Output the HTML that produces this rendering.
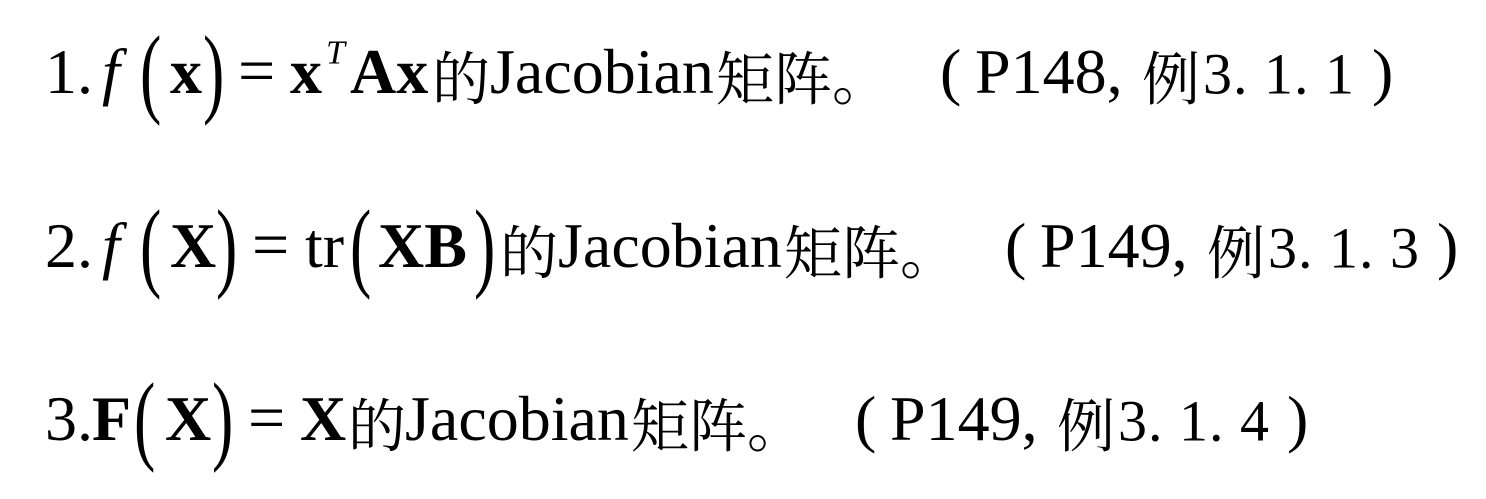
<!DOCTYPE html>
<html><head><meta charset="utf-8"><style>
html,body{margin:0;padding:0;background:#fff;width:1486px;height:499px;overflow:hidden}
.l{position:absolute;left:0;top:0;width:1486px;height:1px}
.s{position:absolute;white-space:nowrap;font-family:"Liberation Serif","Noto Serif CJK SC",serif;font-size:64px;color:#000;line-height:1;transform:translateY(-0.89em)}
.c{font-family:"Noto Serif CJK SC",serif;font-size:58px}
.d{font-size:58px;letter-spacing:1px}
.b{font-weight:bold}
.i{font-style:italic}
.e{font-size:66px}
</style></head><body>
<div class="l" style="top:97px">
<span class="s" style="left:45px">1.</span>
<span class="s i" style="left:102px">f</span>
<span class="s" style="left:140px;transform:translateY(-0.89em) scaleY(1.55)">(</span>
<span class="s b" style="left:170px">x</span>
<span class="s" style="left:203px;transform:translateY(-0.89em) scaleY(1.55)">)</span>
<span class="s e" style="left:238px">=</span>
<span class="s b" style="left:290px">x</span>
<span class="s i" style="left:326px;font-size:34px;top:-30px">T</span>
<span class="s b" style="left:350px">Ax</span>
<span class="s c" style="left:432px">的</span>
<span class="s" style="left:490px">Jacobian</span>
<span class="s c" style="left:716px">矩阵</span>
<span class="s c" style="left:832px">。</span>
<span class="s" style="left:940px">(</span>
<span class="s" style="left:975px">P148,</span>
<span class="s c" style="left:1142px">例</span>
<span class="s d" style="left:1203px">3. 1. 1</span>
<span class="s" style="left:1372px">)</span>
</div>
<div class="l" style="top:271px">
<span class="s" style="left:45px">2.</span>
<span class="s i" style="left:102px">f</span>
<span class="s" style="left:140px;transform:translateY(-0.89em) scaleY(1.55)">(</span>
<span class="s b" style="left:170px">X</span>
<span class="s" style="left:216px;transform:translateY(-0.89em) scaleY(1.55)">)</span>
<span class="s e" style="left:252px">=</span>
<span class="s" style="left:305px">tr</span>
<span class="s" style="left:350px;transform:translateY(-0.89em) scaleY(1.55)">(</span>
<span class="s b" style="left:378px">XB</span>
<span class="s" style="left:474px;transform:translateY(-0.89em) scaleY(1.55)">)</span>
<span class="s c" style="left:500px">的</span>
<span class="s" style="left:558px">Jacobian</span>
<span class="s c" style="left:784px">矩阵</span>
<span class="s c" style="left:900px">。</span>
<span class="s" style="left:1005px">(</span>
<span class="s" style="left:1040px">P149,</span>
<span class="s c" style="left:1207px">例</span>
<span class="s d" style="left:1268px">3. 1. 3</span>
<span class="s" style="left:1437px">)</span>
</div>
<div class="l" style="top:444px">
<span class="s" style="left:45px">3.</span>
<span class="s b" style="left:92px">F</span>
<span class="s" style="left:134px;transform:translateY(-0.89em) scaleY(1.55)">(</span>
<span class="s b" style="left:165px">X</span>
<span class="s" style="left:212px;transform:translateY(-0.89em) scaleY(1.55)">)</span>
<span class="s e" style="left:248px">=</span>
<span class="s b" style="left:300px">X</span>
<span class="s c" style="left:348px">的</span>
<span class="s" style="left:405px">Jacobian</span>
<span class="s c" style="left:631px">矩阵</span>
<span class="s c" style="left:747px">。</span>
<span class="s" style="left:855px">(</span>
<span class="s" style="left:890px">P149,</span>
<span class="s c" style="left:1057px">例</span>
<span class="s d" style="left:1118px">3. 1. 4</span>
<span class="s" style="left:1287px">)</span>
</div>
</body></html>
